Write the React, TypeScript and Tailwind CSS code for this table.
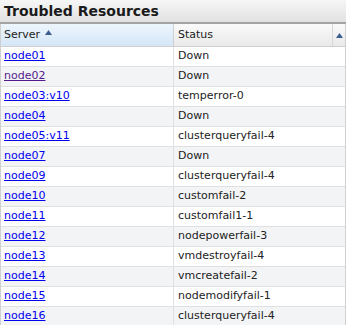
const rows: { server: string; status: string; visited?: boolean }[] = [
  { server: 'node01', status: 'Down' },
  { server: 'node02', status: 'Down', visited: true },
  { server: 'node03:v10', status: 'temperror-0' },
  { server: 'node04', status: 'Down' },
  { server: 'node05:v11', status: 'clusterqueryfail-4' },
  { server: 'node07', status: 'Down' },
  { server: 'node09', status: 'clusterqueryfail-4' },
  { server: 'node10', status: 'customfail-2' },
  { server: 'node11', status: 'customfail1-1' },
  { server: 'node12', status: 'nodepowerfail-3' },
  { server: 'node13', status: 'vmdestroyfail-4' },
  { server: 'node14', status: 'vmcreatefail-2' },
  { server: 'node15', status: 'nodemodifyfail-1' },
  { server: 'node16', status: 'clusterqueryfail-4' },
];

function SortArrow() {
  return (
    <svg width="7" height="5" viewBox="0 0 7 5" className="shrink-0">
      <path d="M3.5 0 L7 5 L0 5 Z" fill="#3b5d8f" />
    </svg>
  );
}

export default function App() {
  return (
    <div
      className="w-[346px] h-[325px] overflow-hidden bg-white text-[11px] text-[#222]"
      style={{ fontFamily: '"DejaVu Sans", Verdana, sans-serif' }}
    >
      <div className="h-[24px] flex items-center px-[4px] bg-gradient-to-b from-[#f6f6f6] to-[#e2e2e2] border-b-2 border-[#a3a3a3]">
        <span className="font-bold text-[14px] text-[#1a1a1a]">Troubled Resources</span>
      </div>
      <div className="border-l border-r border-[#d0d0d0]">
        <div className="flex h-[23px] border-b border-[#d0d0d0]">
          <div className="w-[173px] flex items-center gap-[5px] pl-[3px] pt-[1px] bg-gradient-to-b from-[#eef6fd] to-[#d4e6f7] border-r border-[#d0d0d0]">
            <span>Server</span>
            <span className="-mt-[6px]"><SortArrow /></span>
          </div>
          <div className="flex-1 flex bg-gradient-to-b from-[#fafafa] to-[#e9e9e9]">
            <div className="flex-1 flex items-center pl-[4px] pt-[1px] border-r border-[#d8d8d8]">Status</div>
            <div className="w-[12px] flex items-center justify-center">
              <SortArrow />
            </div>
          </div>
        </div>
        {rows.map((r, i) => (
          <div
            key={r.server}
            className={`flex h-[20px] border-b border-[#e0e0e0] ${i % 2 === 1 ? 'bg-[#f3f4f6]' : 'bg-white'}`}
          >
            <div className="w-[173px] flex items-center pl-[3px] border-r border-[#e0e0e0]">
              <a
                href="#"
                className={`underline ${r.visited ? 'text-[#551a8b]' : 'text-[#0000ee]'}`}
              >
                {r.server}
              </a>
            </div>
            <div className="flex-1 flex items-center pl-[4px]">{r.status}</div>
          </div>
        ))}
      </div>
    </div>
  );
}
